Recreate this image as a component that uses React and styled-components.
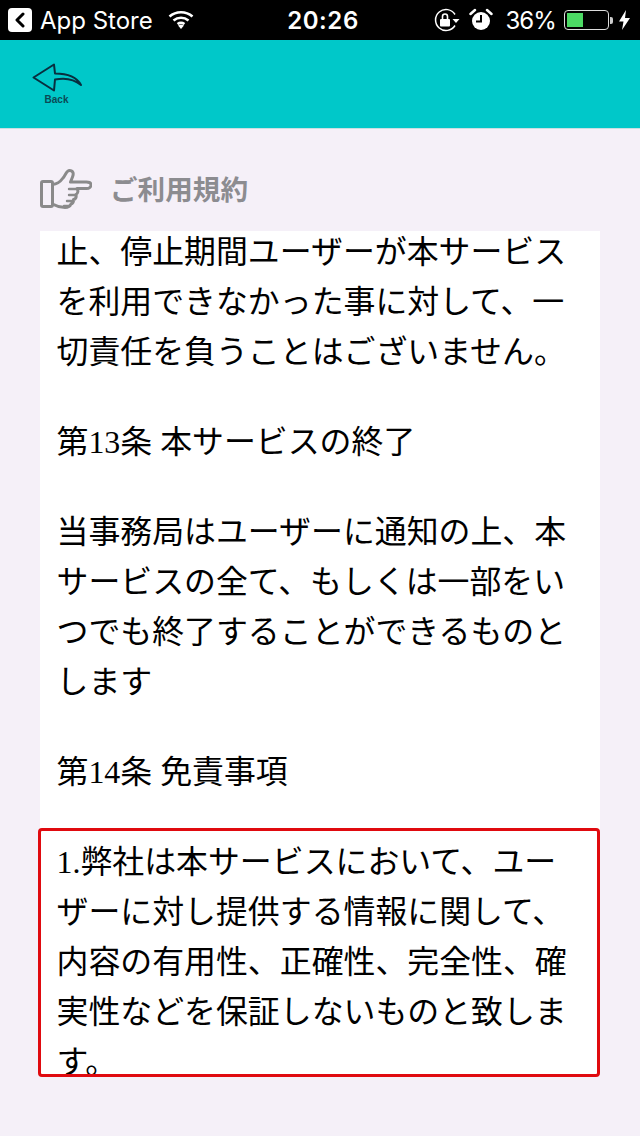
import React from "react";
import styled, { createGlobalStyle } from "styled-components";

const Global = createGlobalStyle`
  html, body { margin: 0; padding: 0; background: #f5f0f8; }
  * { box-sizing: border-box; }
`;

const Page = styled.div`
  width: 640px;
  height: 1136px;
  overflow: hidden;
  background: #f5f0f8;
  display: flex;
  flex-direction: column;
`;

const StatusBar = styled.div`
  height: 40px;
  background: #000;
  color: #fff;
  display: grid;
  grid-template-columns: 1fr auto 1fr;
  align-items: center;
  padding: 0 8px;
  font-family: Inter, "Liberation Sans", Arial, sans-serif;
  font-size: 24px;
`;

const StatusSide = styled.div`
  display: flex;
  align-items: center;
  justify-content: ${(p) => (p.$end ? "flex-end" : "flex-start")};
`;

const BackChip = styled.div`
  width: 24px;
  height: 24px;
  border-radius: 4px;
  background: #fff;
  display: flex;
  align-items: center;
  justify-content: center;
  margin-right: 8px;
`;

const StatusLabel = styled.span`
  margin-right: ${(p) => p.$mr || 0}px;
  letter-spacing: ${(p) => p.$ls || 0}px;
`;

const Clock = styled.span`
  font-size: 24px;
  font-weight: 600;
  letter-spacing: 0.6px;
  margin-left: 6px;
`;

const Battery = styled.div`
  width: 45px;
  height: 20px;
  border: 1.5px solid #ddd;
  border-radius: 4px;
  padding: 2px;
  margin-left: 8px;
`;

const BatteryFill = styled.div`
  height: 100%;
  width: 16px;
  background: #4cd964;
`;

const BatteryCap = styled.div`
  width: 3px;
  height: 7px;
  background: #ccc;
  border-radius: 0 2px 2px 0;
  margin: 0 6px 0 1px;
`;

const NavBar = styled.header`
  height: 89px;
  background: #00c8c9;
  border-bottom: 1px solid #c9dfe2;
  padding: 23px 0 0 30px;
`;

const BackButton = styled.div`
  width: 54px;
  display: flex;
  flex-direction: column;
  align-items: center;
  color: #0b4a55;
`;

const BackLabel = styled.span`
  font-family: "Liberation Sans", Arial, sans-serif;
  font-size: 10px;
  font-weight: 700;
  line-height: 11px;
  margin-top: 1px;
  margin-left: -1px;
`;

const TitleRow = styled.div`
  height: 102px;
  padding: 16px 0 0 40px;
  display: flex;
  align-items: center;
  gap: 18px;
`;

const HandSlot = styled.div`
  display: flex;
  padding-top: 4px;
`;

const Title = styled.h1`
  margin: 0;
  font-family: "Noto Sans CJK JP", "Noto Sans", sans-serif;
  font-size: 27.6px;
  font-weight: 700;
  color: #8c8c90;
`;

const Panel = styled.section`
  position: relative;
  margin-left: 40px;
  width: 560px;
  height: 845px;
  background: #fff;
  overflow: hidden;
`;

const Terms = styled.div`
  padding: 0 0 0 16.5px;
  font-family: "Liberation Serif", "Noto Sans CJK JP", serif;
  font-size: 31.9px;
  line-height: 50px;
  color: #000;
  white-space: nowrap;
`;

const Para = styled.p`
  margin: 0 0 40px;
  &:first-child { margin-top: -3px; }
`;

const HighlightAnchor = styled.div`
  position: relative;
  margin-left: 37.5px;
  width: 562.5px;
  height: 0;
`;

const Highlight = styled.div`
  position: absolute;
  left: 0;
  bottom: -1px;
  width: 100%;
  height: 249px;
  border: 3px solid #e00a0f;
  border-radius: 4px;
  pointer-events: none;
`;

const Hand = () => (
  <svg width="52" height="43" viewBox="0 0 52 43" fill="none" stroke="#8a8a8a" strokeWidth="3" strokeLinejoin="round" strokeLinecap="round">
    <rect x="1.5" y="12.5" width="11" height="25" rx="1.5" />
    <path d="M12.5 15.500c5.500-.5 8-3 10.500-6.500 2.500-3 3.500-7.500 6.500-7.500 3.500 0 4.500 3 3 6.500l-2 5h16c3 0 4.500 1.500 4.500 3s-1.500 3.500-4.500 3.500H37c1.500 2 1 5-1 6 .5 2.500-.5 4.500-2.500 5 .2 2.500-1 4-2.500 4.500-1 2.500-3 3.500-6 3.500-4 0-8-1-11.500-3" />
    <path d="M29 20h8M29 26h7M27 32h6M24 37h6" strokeWidth="2.4" />
  </svg>
);

const ITEMS = [
  ["止、停止期間ユーザーが本サービス", "を利用できなかった事に対して、一", "切責任を負うことはございません。"],
  ["第13条 本サービスの終了"],
  ["当事務局はユーザーに通知の上、本", "サービスの全て、もしくは一部をい", "つでも終了することができるものと", "します"],
  ["第14条 免責事項"],
  ["1.弊社は本サービスにおいて、ユー", "ザーに対し提供する情報に関して、", "内容の有用性、正確性、完全性、確", "実性などを保証しないものと致しま", "す。"],
];

export default function App() {
  return (
    <Page>
      <Global />
      <StatusBar>
        <StatusSide>
          <BackChip>
            <svg width="12" height="16" viewBox="0 0 12 16" fill="none" stroke="#000" strokeWidth="3" strokeLinecap="round" strokeLinejoin="round">
              <path d="M9 2 3 8l6 6" />
            </svg>
          </BackChip>
          <StatusLabel $mr={15}>App Store</StatusLabel>
          <svg width="26" height="20" viewBox="0 0 26 20" fill="none" stroke="#fff" strokeWidth="2.6" strokeLinecap="butt">
            <path d="M1.5 6.500C8 .8 18 .8 24.500 6.500" />
            <path d="M5.5 10.500c4.500-3.700 10.500-3.700 15 0" />
            <path d="M9.5 14c2-1.300 5-1.300 7 0" />
            <path d="M13 19l-3-3.600c1.800-1 4.200-1 6 0z" fill="#fff" stroke="none" />
          </svg>
        </StatusSide>
        <Clock>20:26</Clock>
        <StatusSide $end>
          <svg width="26" height="24" viewBox="0 0 26 24" fill="none" stroke="#fff" strokeWidth="1.5">
            <path d="M21 6.500a10.500 10.500 0 1 0 0 11" />
            <path d="M18.500 11h7l-3.500 4z" fill="#fff" stroke="none" />
            <rect x="6" y="11" width="10" height="7.500" rx="1" fill="#fff" stroke="none" />
            <path d="M8.500 11V8.500a2.500 2.500 0 0 1 5 0V11" strokeWidth="1.6" />
          </svg>
          <svg width="24" height="24" viewBox="0 0 24 24" style={{ marginLeft: 9, marginRight: 12 }}>
            <circle cx="12" cy="13" r="9" fill="#fff" />
            <path d="M12 7v6.500H7" fill="none" stroke="#000" strokeWidth="2" />
            <path d="M1.500 6 6 2M22.500 6 18 2" stroke="#fff" strokeWidth="2.500" strokeLinecap="round" />
          </svg>
          <StatusLabel $ls={-0.9}>36%</StatusLabel>
          <Battery>
            <BatteryFill />
          </Battery>
          <BatteryCap />
          <svg width="11" height="20" viewBox="0 0 11 20" style={{ marginRight: 2 }}>
            <path d="M7 0 0 11.500h4.500L3 20l8-12H6z" fill="#fff" />
          </svg>
        </StatusSide>
      </StatusBar>
      <NavBar>
        <BackButton>
          <svg width="52" height="30" viewBox="0 0 52 30" fill="none" stroke="#082f3f" strokeWidth="2" strokeLinejoin="round" strokeLinecap="round">
            <path d="M2.500 14.500 23 1.500l1 9c10 0 21 2 26 11.500-7-6-16-7.500-26-5.500l-1 11z" />
          </svg>
          <BackLabel>Back</BackLabel>
        </BackButton>
      </NavBar>
      <TitleRow>
        <HandSlot>
          <Hand />
        </HandSlot>
        <Title>ご利用規約</Title>
      </TitleRow>
      <Panel>
        <Terms>
          {ITEMS.map((lines, i) => (
            <Para key={i}>
              {lines.map((l, j) => (
                <React.Fragment key={j}>
                  {l}
                  {j < lines.length - 1 && <br />}
                </React.Fragment>
              ))}
            </Para>
          ))}
        </Terms>
      </Panel>
      <HighlightAnchor>
        <Highlight />
      </HighlightAnchor>
    </Page>
  );
}
